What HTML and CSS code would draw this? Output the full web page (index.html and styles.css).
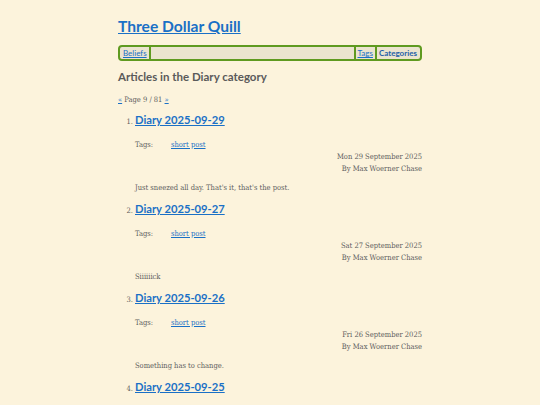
FILE: index.html
```html
<!DOCTYPE html>
<html>
<head>
<meta charset="utf-8">
<link rel="stylesheet" href="styles.css">
</head>
<body>
<div class="page">
  <h1 class="site-title"><a href="#">Three Dollar Quill</a></h1>
  <nav class="nav">
    <a class="nav-item" href="#">Beliefs</a>
    <span class="nav-fill"></span>
    <a class="nav-item sep" href="#">Tags</a>
    <a class="nav-item sep current" href="#">Categories</a>
  </nav>
  <h2 class="cat-title">Articles in the Diary category</h2>
  <p class="pager"><a href="#">«</a> Page 9 / 81 <a href="#">»</a></p>
  <ol class="articles">
    <li>
      <h3 class="art-title"><a href="#">Diary 2025-09-29</a></h3>
      <div class="tags"><span class="tags-label">Tags:</span><a href="#">short post</a></div>
      <div class="meta">Mon 29 September 2025<br>By Max Woerner Chase</div>
      <p class="summary">Just sneezed all day. That's it, that's the post.</p>
    </li>
    <li>
      <h3 class="art-title"><a href="#">Diary 2025-09-27</a></h3>
      <div class="tags"><span class="tags-label">Tags:</span><a href="#">short post</a></div>
      <div class="meta">Sat 27 September 2025<br>By Max Woerner Chase</div>
      <p class="summary">Siiiiiick</p>
    </li>
    <li>
      <h3 class="art-title"><a href="#">Diary 2025-09-26</a></h3>
      <div class="tags"><span class="tags-label">Tags:</span><a href="#">short post</a></div>
      <div class="meta">Fri 26 September 2025<br>By Max Woerner Chase</div>
      <p class="summary">Something has to change.</p>
    </li>
    <li>
      <h3 class="art-title"><a href="#">Diary 2025-09-25</a></h3>
    </li>
  </ol>
</div>
</body>
</html>
```
FILE: styles.css
```css
html, body {
  margin: 0;
  padding: 0;
  background: #fcf3dc;
}
body {
  font-family: "DejaVu Serif", "Liberation Serif", serif;
  font-stretch: condensed;
  color: #606060;
  font-size: 7.5px;
}
a { color: #1a70c6; }
.page {
  width: 304px;
  margin: 0 auto;
  padding-top: 14px;
}
.site-title {
  margin: 0;
  font-family: Lato, "Open Sans", sans-serif;
  font-size: 15.6px;
  font-weight: 700;
  line-height: 24px;
}
.nav {
  display: flex;
  align-items: stretch;
  margin-top: 7px;
  height: 12px;
  border: 2px solid #5f9a20;
  border-radius: 4px;
  background: #ebe4cf;
  padding: 0 1px;
  font-family: Lato, "Open Sans", sans-serif;
  font-stretch: normal;
  font-size: 8px;
  line-height: 12px;
}
.nav-item {
  padding: 0 2px;
  border-right: 2px solid #5f9a20;
}
.nav-item.sep {
  border-right: none;
  border-left: 2px solid #5f9a20;
}
.nav-fill { flex: 1; }
.nav-item.current {
  font-weight: 700;
  text-decoration: none;
  color: #1f5fa8;
}
.cat-title {
  margin: 9px 0 0;
  font-family: Lato, "Open Sans", sans-serif;
  font-stretch: normal;
  font-size: 11.5px;
  font-weight: 700;
  line-height: 14px;
  color: #5a5a5a;
}
.pager {
  margin: 11px 0 0;
  font-size: 7.5px;
  line-height: 10px;
}
.articles {
  margin: 5px 0 0;
  padding-left: 17px;
  font-size: 7.5px;
}
.articles li { margin: 0; }
.art-title {
  display: inline;
  margin: 0;
  font-family: Lato, "Open Sans", sans-serif;
  font-stretch: normal;
  font-size: 11.2px;
  font-weight: 700;
  line-height: 20px;
}
.tags {
  margin-top: 9px;
  line-height: 12px;
}
.tags-label {
  display: inline-block;
  width: 36px;
}
.meta {
  text-align: right;
  line-height: 12px;
}
.summary {
  margin: 7px 0 5px;
  line-height: 12px;
}
```
